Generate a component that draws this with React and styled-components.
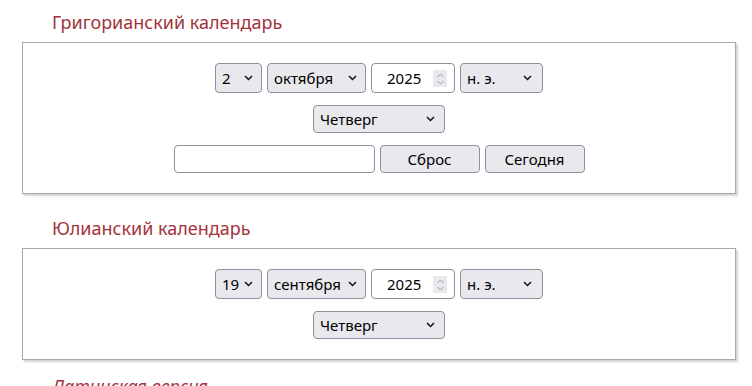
import React from 'react'
import styled, { createGlobalStyle } from 'styled-components'

const GlobalStyle = createGlobalStyle`
  html, body {
    margin: 0;
    padding: 0;
    background: #fff;
  }
  body {
    font-family: 'Noto Sans', 'Open Sans', Arial, sans-serif;
    color: #000;
    overflow: hidden;
  }
`

const Page = styled.div`
  width: 752px;
  height: 386px;
  padding: 8px 16px 0 22px;
  box-sizing: border-box;
  overflow: hidden;
`

const Heading = styled.h2`
  margin: 0 0 ${({ $gap }) => $gap}px 30px;
  font-size: 18px;
  font-weight: 400;
  line-height: 28px;
  color: #a3323c;
  font-style: ${({ $italic }) => ($italic ? 'italic' : 'normal')};
  white-space: nowrap;
`

const Panel = styled.div`
  width: 714px;
  box-sizing: border-box;
  border: 1px solid #a9a9a9;
  box-shadow: 2px 2px 2px rgba(0, 0, 0, 0.18);
  padding: 20px 0 20px;
  display: flex;
  flex-direction: column;
  align-items: center;
  gap: 12px;
  margin-bottom: ${({ $after }) => $after}px;
`

const Row = styled.div`
  display: flex;
  align-items: center;
  gap: 5px;
`

const Field = styled.div`
  position: relative;
  width: ${({ $w }) => $w}px;
  height: ${({ $h }) => $h || 28}px;
  box-sizing: border-box;
  border: 1px solid #8f8f9d;
  border-radius: 4px;
  background: ${({ $light }) => ($light ? '#fff' : '#e9e9ed')};
  display: flex;
  align-items: center;
  font-size: 15px;
  white-space: nowrap;
  padding-left: ${({ $pl }) => $pl ?? 6}px;
`

const Chevron = styled.svg`
  position: absolute;
  right: ${({ $r }) => $r ?? 9}px;
  top: 50%;
  margin-top: -3px;
  width: 9px;
  height: 6px;
`

const Spinner = styled.div`
  position: absolute;
  right: 7px;
  top: 6px;
  width: 14px;
  height: 17px;
  background: #e9e9ed;
  display: flex;
  align-items: center;
  justify-content: center;
`

const Button = styled.div`
  width: 100px;
  height: 28px;
  box-sizing: border-box;
  border: 1px solid #8f8f9d;
  border-radius: 4px;
  background: #e9e9ed;
  font-size: 15px;
  display: flex;
  align-items: center;
  justify-content: center;
`

const Select = ({ w, h, value, r }) => (
  <Field $w={w} $h={h}>
    {value}
    <Chevron $r={r} viewBox="0 0 9 6">
      <path d="M1 1l3.5 3.5L8 1" fill="none" stroke="#111" strokeWidth="1.5" />
    </Chevron>
  </Field>
)

const YearInput = ({ value }) => (
  <Field $w={84} $h={30} $light $pl={15}>
    {value}
    <Spinner>
      <svg width="9" height="14" viewBox="0 0 9 14">
        <path d="M1.5 5l3-3 3 3M1.5 9l3 3 3-3" fill="none" stroke="#9a9aa4" strokeWidth="1" />
      </svg>
    </Spinner>
  </Field>
)

const Calendar = ({ day, month, withTools, after }) => (
  <Panel $after={after}>
    <Row>
      <Select w={47} h={30} value={day} r={8} />
      <Select w={99} h={30} value={month} r={8} />
      <YearInput value="2025" />
      <Select w={83} h={30} value="н. э." r={10} />
    </Row>
    <Row>
      <Select w={132} value="Четверг" />
    </Row>
    {withTools && (
      <Row>
        <Field $w={201} $light />
        <Button>Сброс</Button>
        <Button>Сегодня</Button>
      </Row>
    )}
  </Panel>
)

export default function App() {
  return (
    <Page>
      <GlobalStyle />
      <Heading $gap={6}>Григорианский календарь</Heading>
      <Calendar day="2" month="октября" withTools after={20} />
      <Heading $gap={6}>Юлианский календарь</Heading>
      <Calendar day="19" month="сентября" after={12} />
      <Heading $italic $gap={0}>Латинская версия</Heading>
    </Page>
  )
}
